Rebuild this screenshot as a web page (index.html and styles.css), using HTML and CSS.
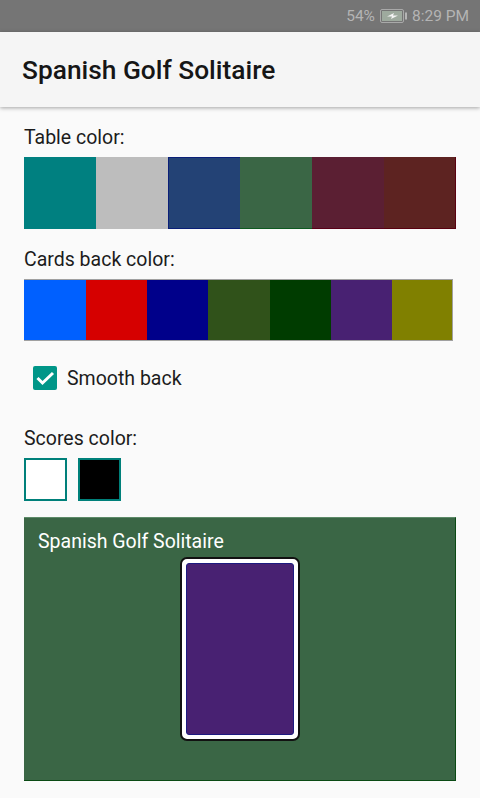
FILE: index.html
```html
<!DOCTYPE html>
<html lang="en">
<head>
<meta charset="utf-8">
<title>Spanish Golf Solitaire</title>
<link rel="stylesheet" href="styles.css">
</head>
<body>
<div class="status-bar">
  <span>54%</span>
  <svg class="battery" width="27" height="14" viewBox="0 0 27 14">
    <rect x="0.5" y="0.5" width="23" height="13" rx="1.5" fill="none" stroke="#a9a9a9"/>
    <rect x="2" y="2" width="20" height="10" fill="#9eaa9e"/>
    <path d="M7 7.500l7-3.500-1 2.500h5l-7 3.500 1-2.500z" fill="#f4f4f4"/>
    <rect x="25" y="3.500" width="2" height="7" fill="#b5b5b5"/>
  </svg>
  <span>8:29 PM</span>
</div>
<header class="app-bar"><h1>Spanish Golf Solitaire</h1></header>
<main class="content">
  <p class="label label-table">Table color:</p>
  <div class="swatches table-swatches">
    <div class="c-teal"></div>
    <div class="c-silver"></div>
    <div class="c-navy"></div>
    <div class="c-green"></div>
    <div class="c-wine"></div>
    <div class="c-maroon"></div>
  </div>
  <p class="label label-back">Cards back color:</p>
  <div class="back-swatches">
    <div class="b-blue"></div>
    <div class="b-red"></div>
    <div class="b-navy"></div>
    <div class="b-moss"></div>
    <div class="b-dark"></div>
    <div class="b-purple"></div>
    <div class="b-olive"></div>
  </div>
  <div class="check-row">
    <span class="checkbox">
      <svg width="24" height="24" viewBox="0 0 24 24"><path d="M4.500 12l5 5L20 7" fill="none" stroke="#fff" stroke-width="3"/></svg>
    </span>
    <span class="check-label">Smooth back</span>
  </div>
  <p class="label label-scores">Scores color:</p>
  <div class="score-swatches">
    <div class="score score-white"></div>
    <div class="score score-black"></div>
  </div>
  <section class="preview">
    <p class="preview-title">Spanish Golf Solitaire</p>
    <div class="card"><div class="card-back"></div></div>
  </section>
</main>
</body>
</html>
```
FILE: styles.css
```css
* { box-sizing: border-box; }
html, body { margin: 0; padding: 0; }
body {
  width: 480px;
  height: 798px;
  overflow: hidden;
  background: #fafafa;
  font-family: Roboto, "Liberation Sans", sans-serif;
  color: #1c1c1c;
}
.status-bar {
  height: 32px;
  background: #757575;
  color: #b4b4b4;
  font-size: 15.500px;
  display: flex;
  align-items: center;
  justify-content: flex-end;
  gap: 5px;
  padding-right: 11px;
}
.battery { display: block; }
.app-bar {
  height: 75px;
  background: #f5f5f5;
  display: flex;
  align-items: center;
  padding-left: 22px;
  box-shadow: 0 1px 4px rgba(0, 0, 0, 0.35);
  position: relative;
}
.app-bar h1 {
  margin: 0;
  font-size: 26.300px;
  font-weight: 500;
  color: #161616;
}
.content { padding: 0 24px; }
.label {
  margin: 0;
  font-size: 19.500px;
  line-height: 24px;
}
.label-table { margin-top: 19px; }
.swatches { display: flex; }
.table-swatches {
  margin-top: 7px;
  width: 432px;
  height: 72px;
}
.table-swatches div { flex: none; width: 72px; }
.c-teal { background: #008080; }
.c-silver { background: #bdbdbd; }
.c-navy { background: #234275; border: 1px solid #0a1f78; border-right: 0; }
.c-green { background: #3a6645; border-bottom: 1px solid #0d5a20; }
.c-wine { background: #5b1f33; border-bottom: 1px solid #5a0018; }
.c-maroon { background: #5d2321; border-bottom: 1px solid #5a0010; border-right: 1px solid #5a0010; }
.label-back { margin-top: 19px; }
.back-swatches {
  display: grid;
  grid-template-columns: 62px 61px 61px 62px 61px 61px 1fr;
  margin-top: 7px;
  width: 429px;
  height: 62px;
  border: 1px solid #a0a0a0;
  border-left: 0;
}
.b-blue { background: #0060ff; }
.b-red { background: #d60000; }
.b-navy { background: #00008a; }
.b-moss { background: #30521a; }
.b-dark { background: #003c00; }
.b-purple { background: #482172; }
.b-olive { background: #808000; }
.check-row {
  display: flex;
  align-items: center;
  margin-top: 25px;
  padding-left: 9px;
  gap: 10px;
  height: 24px;
}
.checkbox {
  width: 24px;
  height: 24px;
  background: #009688;
  border-radius: 2px;
  display: block;
}
.checkbox svg { display: block; }
.check-label { font-size: 19.500px; line-height: 22px; padding-top: 2px; }
.label-scores { margin-top: 37px; }
.score-swatches {
  display: flex;
  gap: 11px;
  margin-top: 7px;
}
.score {
  width: 43px;
  height: 43px;
  border: 2px solid #00807a;
}
.score-white { background: #fff; }
.score-black { background: #000; }
.preview {
  margin-top: 16px;
  width: 432px;
  height: 264px;
  background: #3a6645;
  border-right: 1px solid #0a4a14;
  border-bottom: 1px solid #0a4a14;
  border-top: 1px solid #5d8a68;
  position: relative;
}
.preview-title {
  margin: 0;
  padding: 13px 0 0 14px;
  font-size: 19.500px;
  line-height: 22px;
  color: #fff;
}
.card {
  position: absolute;
  left: 156px;
  top: 39px;
  width: 120px;
  height: 184px;
  background: #fff;
  border: 2px solid #111;
  border-radius: 7px;
  padding: 4px;
}
.card-back {
  width: 100%;
  height: 100%;
  background: #482172;
  border: 1px solid #1c1a80;
  border-radius: 3px;
}
```
